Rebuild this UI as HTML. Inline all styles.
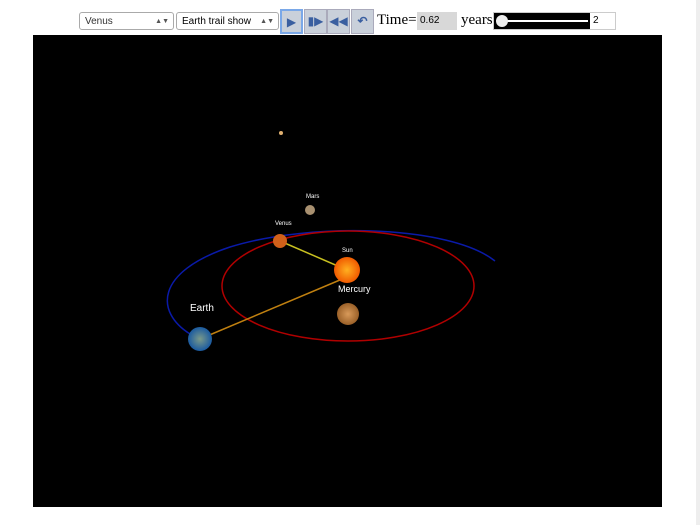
<!DOCTYPE html>
<html><head><style>
body{margin:0;width:700px;height:525px;background:#fff;position:relative;overflow:hidden;font-family:"Liberation Sans",sans-serif}
.sel{position:absolute;top:12px;height:18px;border:1px solid #aaa;border-radius:3px;background:#fff;font-size:10px;line-height:18px;padding-left:5px;box-sizing:border-box;color:#333}
.sel span{position:absolute;right:4px;top:0;font-size:7px;color:#555}
.btn{position:absolute;top:9px;width:23px;height:25px;background:#c9d0da;border:1px solid #aab;box-sizing:border-box;color:#3a5fa0;font-size:12px;text-align:center;line-height:23px}
</style></head><body>
<div class="sel" style="left:79px;width:95px">Venus<span>▲▼</span></div>
<div class="sel" style="left:176px;width:103px;color:#000">Earth trail show<span>▲▼</span></div>
<div class="btn" style="left:280px;border:2px solid #7aa8e8">▶</div>
<div class="btn" style="left:304px">▮▶</div>
<div class="btn" style="left:327px">◀◀</div>
<div class="btn" style="left:351px;font-weight:bold">↶</div>
<div style="position:absolute;left:377px;top:12px;font-family:'Liberation Serif',serif;font-size:15px">Time=</div>
<div style="position:absolute;left:417px;top:12px;width:40px;height:18px;background:#d8d8d8;font-size:10px;line-height:18px;padding-left:3px;box-sizing:border-box">0.62</div>
<div style="position:absolute;left:461px;top:12px;font-family:'Liberation Serif',serif;font-size:15px">years</div>
<div style="position:absolute;left:493px;top:12px;width:123px;height:18px;border:1px solid #ccc;box-sizing:border-box;background:#fff">
<div style="position:absolute;left:0;top:0;width:96px;height:16px;background:#000"></div>
<div style="position:absolute;left:4px;top:7px;width:90px;height:2px;background:#fff"></div>
<div style="position:absolute;left:2px;top:2px;width:12px;height:12px;border-radius:50%;background:#eee"></div>
<div style="position:absolute;left:99px;top:2px;font-size:10px">2</div></div>
<svg style="position:absolute;left:0;top:0" width="700" height="525">
<defs>
<radialGradient id="sun"><stop offset="0" stop-color="#ffb020"/><stop offset="1" stop-color="#f05a00"/></radialGradient>
<radialGradient id="mer"><stop offset="0" stop-color="#d89a5a"/><stop offset="1" stop-color="#9a6028"/></radialGradient>
<radialGradient id="ear"><stop offset="0" stop-color="#7a9a8a"/><stop offset="1" stop-color="#1a5aa0"/></radialGradient>
</defs>
<rect x="33" y="35" width="629" height="472" fill="#000"/>
<path d="M190,334 C155,312 155,272 230,247 C310,222 450,225 495,261" fill="none" stroke="#0a1aa8" stroke-width="1.5"/>
<ellipse cx="348" cy="286" rx="126" ry="55" fill="none" stroke="#b00000" stroke-width="1.5"/>
<line x1="347" y1="270" x2="280" y2="241" stroke="#c8c020" stroke-width="1.5"/>
<line x1="347" y1="277" x2="200" y2="339" stroke="#c08010" stroke-width="1.5"/>
<circle cx="347" cy="270" r="13" fill="url(#sun)"/>
<circle cx="280" cy="241" r="7" fill="#d0601a"/>
<circle cx="348" cy="314" r="11" fill="url(#mer)"/>
<circle cx="200" cy="339" r="12" fill="url(#ear)"/>
<circle cx="310" cy="210" r="5" fill="#a89070"/>
<circle cx="281" cy="133" r="2" fill="#e0b070"/>
<g fill="#fff" font-size="6">
<text x="275" y="225">Venus</text><text x="306" y="198">Mars</text><text x="342" y="252">Sun</text>
<text x="190" y="311" font-size="10">Earth</text><text x="338" y="292" font-size="9">Mercury</text></g>
<rect x="696" y="0" width="4" height="525" fill="#eee"/>
</svg>
</body></html>
